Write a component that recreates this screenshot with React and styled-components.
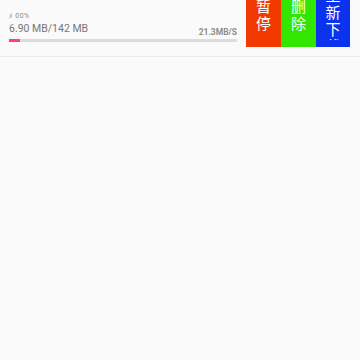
import React from 'react'
import styled, { createGlobalStyle } from 'styled-components'

const GlobalStyle = createGlobalStyle`
  html, body {
    margin: 0;
    padding: 0;
    background: #fafafa;
    font-family: Roboto, "Noto Sans CJK SC", sans-serif;
  }
`

const List = styled.div`
  width: 360px;
  height: 360px;
  overflow: hidden;
`

// list is scrolled a little, so the first row's top is out of view
const Scroller = styled.div`
  margin-top: -15px;
`

const Item = styled.div`
  display: flex;
  align-items: flex-start;
  height: 72px;
  border-bottom: 1px solid #ebebeb;
  box-sizing: border-box;
  padding-right: 10px;
`

const Content = styled.div`
  flex: 1;
  display: flex;
  flex-direction: column;
  padding: 0 9px;
  min-width: 0;
`

const Title = styled.div`
  font-size: 13px;
  line-height: 16px;
  color: #333;
  white-space: nowrap;
  overflow: hidden;
`

const Status = styled.div`
  margin-top: 11px;
  font-size: 7px;
  line-height: 8px;
  letter-spacing: 0.5px;
  color: #8a8a8a;
`

const SizeRow = styled.div`
  display: flex;
  justify-content: space-between;
  align-items: flex-end;
  height: 17px;
`

const Size = styled.span`
  margin-top: 3px;
  font-size: 10.5px;
  line-height: 12px;
  color: #777;
  align-self: flex-start;
`

const Speed = styled.span`
  font-size: 8.5px;
  font-weight: 700;
  line-height: 9px;
  color: #8c8c8c;
`

const Track = styled.div`
  margin-top: 2px;
  height: 3px;
  background: #dcdcdc;
`

const Fill = styled.div`
  height: 100%;
  background: #ff3f80;
`

const Actions = styled.div`
  display: flex;
  height: 62px;
`

const Action = styled.button`
  width: ${p => p.$w}px;
  height: 62px;
  border: none;
  margin: 0;
  background: ${p => p.$bg};
  padding: ${p => p.$top}px 9px 0;
  box-sizing: border-box;
  display: flex;
  flex-direction: column;
  align-items: center;
  overflow: hidden;
`

const Label = styled.span`
  display: block;
  width: 17px;
  max-height: ${p => 55 - p.$top}px;
  overflow: hidden;
  color: #fff;
  font-family: "Noto Sans CJK SC", sans-serif;
  font-size: 15px;
  line-height: 17px;
  text-align: center;
  word-break: break-all;
`

const actions = [
  { label: '暂停', bg: '#f23a00', w: 35, top: 12 },
  { label: '删除', bg: '#33e600', w: 35, top: 12 },
  { label: '重新下载', bg: '#0b33ee', w: 34, top: 1 },
]

export default function App() {
  const percent = 6.90 / 142 * 100
  return (
    <List>
      <GlobalStyle />
      <Scroller>
        <Item>
          <Content>
            <Title>正在下载的应用安装包文件名称示例.apk</Title>
            <Status>ﾒ 00%</Status>
            <SizeRow>
              <Size>6.90 MB/142 MB</Size>
              <Speed>21.3MB/S</Speed>
            </SizeRow>
            <Track>
              <Fill style={{ width: `${percent}%` }} />
            </Track>
          </Content>
          <Actions>
            {actions.map(a => (
              <Action key={a.label} $bg={a.bg} $w={a.w} $top={a.top}>
                <Label $top={a.top}>{a.label}</Label>
              </Action>
            ))}
          </Actions>
        </Item>
      </Scroller>
    </List>
  )
}
